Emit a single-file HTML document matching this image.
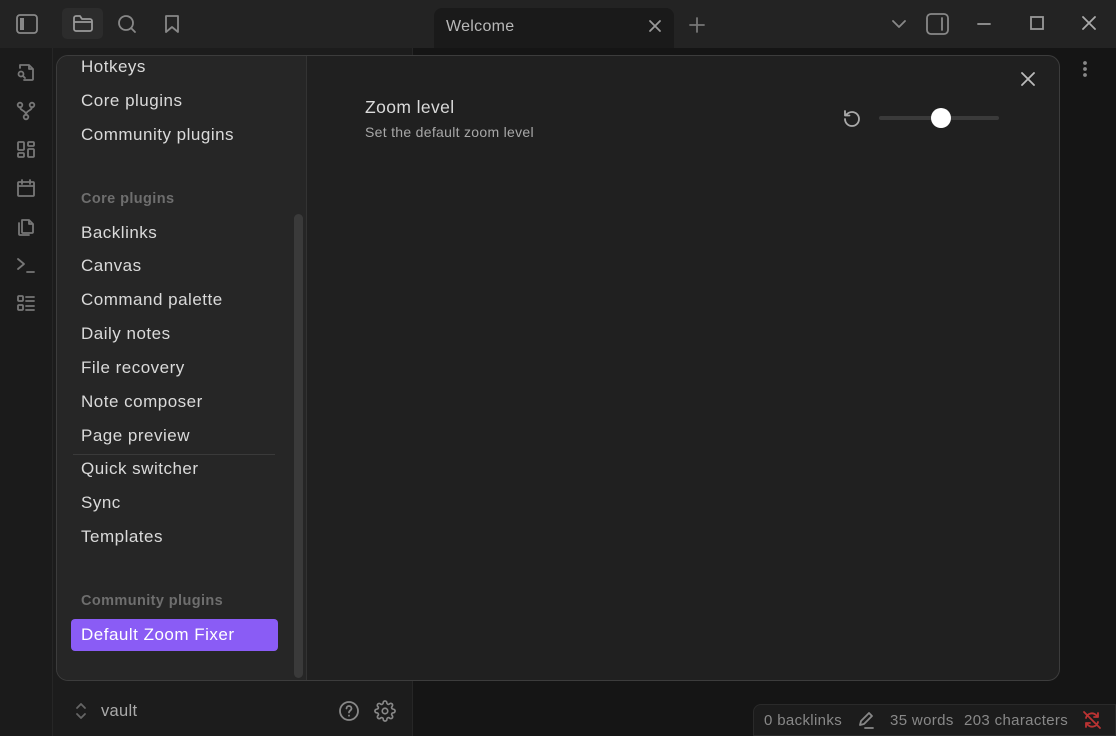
<!DOCTYPE html>
<html><head><meta charset="utf-8"><style>
*{box-sizing:border-box;margin:0;padding:0}
body{width:1116px;height:736px;overflow:hidden;background:#161616;font-family:"Liberation Sans",sans-serif;position:relative;color:#dcddde}
.abs{position:absolute}
svg{fill:none;stroke:currentColor;stroke-width:1.8;stroke-linecap:round;stroke-linejoin:round}
</style></head><body>
<div class="abs" style="left:0;top:0;width:1116px;height:48px;background:#232323"></div>
<div class="abs" style="left:434px;top:8px;width:240px;height:40px;background:#1a1a1a;border-radius:8px 8px 0 0"></div>
<div class="abs" style="left:446px;top:18px;font-size:16px;color:#b8b8b8;letter-spacing:.3px">Welcome</div>
<svg class="abs" style="left:648px;top:19px;color:#999" width="14" height="14" viewBox="0 0 14 14"><path d="M2 2l10 10M12 2L2 12"/></svg>
<svg class="abs" style="left:689px;top:17px;color:#777" width="16" height="16" viewBox="0 0 16 16"><path d="M8 1v14M1 8h14"/></svg>
<svg class="abs" style="left:16px;top:14px;color:#888" width="22" height="20" viewBox="0 0 22 20"><rect x="1" y="1" width="20" height="18" rx="3"/><rect x="4" y="4" width="4" height="12" fill="#888" stroke="none"/></svg>
<div class="abs" style="left:62px;top:8px;width:41px;height:31px;background:#2c2c2c;border-radius:5px"></div>
<svg class="abs" style="left:73px;top:15px;color:#999" width="20" height="17" viewBox="0 0 20 17"><path d="M1 3a2 2 0 012-2h4l2 3h8a2 2 0 012 2v8a2 2 0 01-2 2H3a2 2 0 01-2-2z M1 7h18"/></svg>
<svg class="abs" style="left:117px;top:14px;color:#888" width="20" height="20" viewBox="0 0 20 20"><circle cx="9" cy="9" r="7"/><path d="M14 14l4 4"/></svg>
<svg class="abs" style="left:164px;top:14px;color:#888" width="16" height="20" viewBox="0 0 16 20"><path d="M2 2h12v16l-6-5-6 5z"/></svg>
<svg class="abs" style="left:892px;top:20px;color:#888" width="14" height="9" viewBox="0 0 14 9"><path d="M1 1l6 6 6-6"/></svg>
<svg class="abs" style="left:926px;top:13px;color:#888" width="23" height="22" viewBox="0 0 23 22"><rect x="1" y="1" width="21" height="20" rx="4"/><path d="M16 5v12"/></svg>
<svg class="abs" style="left:977px;top:23px;color:#999" width="14" height="2" viewBox="0 0 14 2"><path d="M1 1h12"/></svg>
<svg class="abs" style="left:1030px;top:16px;color:#999" width="14" height="14" viewBox="0 0 14 14"><rect x="1" y="1" width="12" height="12" stroke-linecap="square" stroke-linejoin="miter"/></svg>
<svg class="abs" style="left:1082px;top:16px;color:#aaa" width="14" height="14" viewBox="0 0 14 14"><path d="M1 1l12 12M13 1L1 13"/></svg>
<div class="abs" style="left:0;top:48px;width:53px;height:688px;background:#1b1b1b;border-right:1px solid #262626"></div>
<div class="abs" style="left:53px;top:48px;width:360px;height:688px;background:#1c1c1c;border-right:1px solid #262626"></div>
<div class="abs" style="left:413px;top:48px;width:703px;height:688px;background:#151515"></div>
<svg class="abs" style="left:16px;top:62px;color:#777" width="20" height="20" viewBox="0 0 20 20"><path d="M4 6V3h9l4 4v10a1 1 0 01-1 1H8 M13 3v4h4"/><circle cx="5" cy="12" r="2.5"/><path d="M7 14l2 2"/></svg>
<svg class="abs" style="left:16px;top:101px;color:#777" width="20" height="20" viewBox="0 0 20 20"><circle cx="4" cy="4" r="2.3"/><circle cx="16" cy="4" r="2.3"/><circle cx="10" cy="16" r="2.3"/><path d="M4 6c0 4 6 3 6 8M16 6c0 4-6 3-6 8"/></svg>
<svg class="abs" style="left:16px;top:140px;color:#777" width="20" height="20" viewBox="0 0 20 20"><rect x="2" y="2" width="6" height="8" rx="1"/><rect x="12" y="2" width="6" height="4" rx="1"/><rect x="2" y="13" width="6" height="4" rx="1"/><rect x="12" y="9" width="6" height="8" rx="1"/></svg>
<svg class="abs" style="left:16px;top:178px;color:#777" width="20" height="20" viewBox="0 0 20 20"><rect x="2" y="4" width="16" height="14" rx="1"/><path d="M2 8h16M6 2v4M14 2v4"/></svg>
<svg class="abs" style="left:16px;top:216px;color:#777" width="20" height="20" viewBox="0 0 20 20"><path d="M6 4h7l4 4v8a1 1 0 01-1 1H7a1 1 0 01-1-1z M13 4v4h4 M3 7v11a1 1 0 001 1h9"/></svg>
<svg class="abs" style="left:16px;top:255px;color:#777" width="20" height="20" viewBox="0 0 20 20"><path d="M2 4l6 5-6 5M11 17h7"/></svg>
<svg class="abs" style="left:16px;top:293px;color:#777" width="20" height="20" viewBox="0 0 20 20"><rect x="2" y="3" width="5" height="5" rx="1"/><rect x="2" y="12" width="5" height="5" rx="1"/><path d="M10 4h8M10 8h8M10 13h8M10 17h8"/></svg>
<svg class="abs" style="left:75px;top:702px;color:#666" width="12" height="18" viewBox="0 0 12 18"><path d="M2 6l4-4 4 4M2 12l4 4 4-4"/></svg>
<div class="abs" style="left:101px;top:702px;font-size:16.5px;color:#aaa;letter-spacing:.3px">vault</div>
<svg class="abs" style="left:338px;top:700px;color:#888" width="22" height="22" viewBox="0 0 22 22"><circle cx="11" cy="11" r="9"/><path d="M8.5 8.5a2.5 2.5 0 015 0c0 2-2.5 2-2.5 4M11 15.5v.3"/></svg>
<svg class="abs" style="left:374px;top:700px;color:#888" width="22" height="22" viewBox="0 0 24 24"><circle cx="12" cy="12" r="3"/><path d="M19.4 15a1.65 1.65 0 00.33 1.820l.06.06a2 2 0 11-2.83 2.83l-.06-.06a1.65 1.65 0 00-1.820-.33 1.650 1.650 0 00-1 1.510V21a2 2 0 11-4 0v-.09A1.65 1.65 0 009 19.4a1.65 1.65 0 00-1.82.33l-.06.06a2 2 0 11-2.83-2.83l.06-.06A1.65 1.65 0 004.68 15a1.65 1.65 0 00-1.51-1H3a2 2 0 110-4h.09A1.65 1.65 0 004.6 9a1.65 1.65 0 00-.33-1.82l-.06-.06a2 2 0 112.83-2.83l.06.06A1.65 1.65 0 009 4.68a1.65 1.65 0 001-1.51V3a2 2 0 114 0v.09a1.65 1.65 0 001 1.51 1.65 1.65 0 001.82-.33l.06-.06a2 2 0 112.83 2.83l-.06.06A1.65 1.65 0 0019.4 9a1.65 1.65 0 001.51 1H21a2 2 0 110 4h-.09a1.65 1.65 0 00-1.51 1z"/></svg>
<div class="abs" style="left:753px;top:704px;width:363px;height:32px;background:#1c1c1c;border:1px solid #2a2a2a;border-radius:8px 0 0 0"></div>
<div class="abs" style="left:764px;top:712px;font-size:15px;color:#888;white-space:nowrap;letter-spacing:.35px">0 backlinks</div>
<svg class="abs" style="left:857px;top:711px;color:#888" width="18" height="18" viewBox="0 0 18 18"><path d="M3 14l1-4 8-8 3 3-8 8z M8 17h8"/></svg>
<div class="abs" style="left:890px;top:712px;font-size:15px;color:#888;white-space:nowrap;letter-spacing:.35px">35 words</div>
<div class="abs" style="left:964px;top:712px;font-size:15px;color:#888;white-space:nowrap;letter-spacing:.35px">203 characters</div>
<svg class="abs" style="left:1082px;top:710px;color:#b33" width="20" height="20" viewBox="0 0 20 20"><path d="M2 2l16 16M4 8a6 6 0 0110-3l2 2M16 12a6 6 0 01-10 3l-2-2M16 3v4h-4M4 17v-4h4"/></svg>
<svg class="abs" style="left:1083px;top:61px;color:#888" width="4" height="16" viewBox="0 0 4 16"><circle cx="2" cy="2" r="1" fill="#888"/><circle cx="2" cy="8" r="1" fill="#888"/><circle cx="2" cy="14" r="1" fill="#888"/></svg>
<div class="abs" style="left:56px;top:55px;width:1004px;height:626px;background:#202020;border:1px solid #3c3c3c;border-radius:12px;overflow:hidden">
  <div class="abs" style="left:0;top:0;width:250px;height:626px;background:#262626;border-right:1px solid #333"></div>
  <div class="abs" style="left:237px;top:158px;width:9px;height:464px;background:#3a3a3a;border-radius:5px"></div>
  <div class="abs" style="left:16px;top:398px;width:202px;height:1px;background:#3a3a3a"></div>
  <div style="position:absolute;left:24px;top:1px;font-size:17px;letter-spacing:.5px;color:#dadada;line-height:34px">
    <div style="position:absolute;top:-7px;white-space:nowrap">Hotkeys</div>
    <div style="position:absolute;top:27px;white-space:nowrap">Core plugins</div>
    <div style="position:absolute;top:61px;white-space:nowrap">Community plugins</div>
    <div style="position:absolute;top:125px;white-space:nowrap;font-size:14.5px;letter-spacing:.4px;color:#6e6e6e;font-weight:bold">Core plugins</div>
    <div style="position:absolute;top:159px;white-space:nowrap">Backlinks</div>
    <div style="position:absolute;top:192px;white-space:nowrap">Canvas</div>
    <div style="position:absolute;top:226px;white-space:nowrap">Command palette</div>
    <div style="position:absolute;top:260px;white-space:nowrap">Daily notes</div>
    <div style="position:absolute;top:294px;white-space:nowrap">File recovery</div>
    <div style="position:absolute;top:328px;white-space:nowrap">Note composer</div>
    <div style="position:absolute;top:362px;white-space:nowrap">Page preview</div>
    <div style="position:absolute;top:395px;white-space:nowrap">Quick switcher</div>
    <div style="position:absolute;top:429px;white-space:nowrap">Sync</div>
    <div style="position:absolute;top:463px;white-space:nowrap">Templates</div>
    <div style="position:absolute;top:527px;white-space:nowrap;font-size:14.5px;letter-spacing:.4px;color:#6e6e6e;font-weight:bold">Community plugins</div>
  </div>
  <div class="abs" style="left:14px;top:563px;width:207px;height:32px;background:#8a5cf5;border-radius:4px;color:#fff;font-size:17px;letter-spacing:.5px;line-height:32px;padding-left:10px">Default Zoom Fixer</div>
  <div class="abs" style="left:308px;top:41px;font-size:17.5px;letter-spacing:.4px;color:#dadada">Zoom level</div>
  <div class="abs" style="left:308px;top:68px;font-size:14px;letter-spacing:.3px;color:#a8a8a8">Set the default zoom level</div>
  <svg class="abs" style="left:784px;top:52px;color:#aaa" width="22" height="22" viewBox="0 0 22 22"><path d="M4 11a7 7 0 107-7c-2.5 0-4.5 1.3-6 3 M4 3v4.5h4.5"/></svg>
  <div class="abs" style="left:822px;top:60px;width:120px;height:4px;background:#3a3a3a;border-radius:2px"></div>
  <div class="abs" style="left:874px;top:52px;width:20px;height:20px;background:#fff;border-radius:50%"></div>
  <svg class="abs" style="left:964px;top:16px;color:#bbb" width="14" height="14" viewBox="0 0 14 14"><path d="M1 1l12 12M13 1L1 13"/></svg>
</div>
</body></html>
